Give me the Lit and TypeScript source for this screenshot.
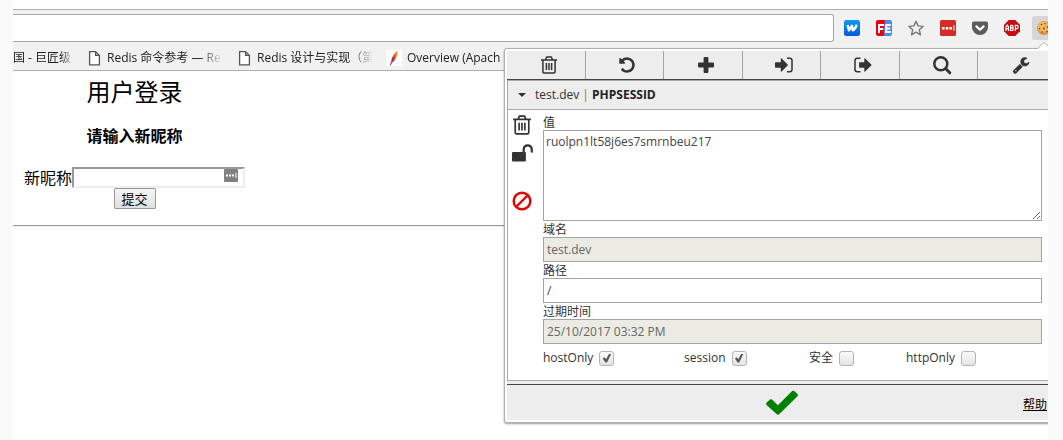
import { LitElement, html, css, svg } from "lit";
import { customElement, property } from "lit/decorators.js";

const shapes: Record<string, unknown> = {
  trash: svg`<g fill="none" stroke="currentColor" stroke-width="1.5" stroke-linejoin="round"><path d="M1 4h16M5.600 3.700L6.600 1h4.800l1 2.700M2.900 4.300v10.900q0 1.800 1.700 1.800h8.800q1.700 0 1.700-1.800V4.300M6.400 7v7M9 7v7M11.600 7v7"/></g>`,
  undo: svg`<path transform="scale(.01005)" fill="currentColor" d="M1664 896q0 156-61 298t-164 245-245 164-298 61q-172 0-327-72.500t-264-204.500q-7-10-6.500-22.500t8.500-20.500l137-138q10-9 25-9 16 2 23 12 73 95 179 147t225 52q104 0 198.500-40.500t163.500-109.500 109.500-163.500 40.500-198.500-40.500-198.500-109.500-163.500-163.500-109.500-198.500-40.500q-98 0-188 35.500t-160 101.500l137 138q31 30 14 69-17 40-59 40h-448q-26 0-45-19t-19-45v-448q0-42 40-59 39-17 69 14l130 129q107-101 244.500-156.500t284.500-55.500q156 0 298 61t245 164 164 245 61 298z"/>`,
  plus: svg`<path fill="currentColor" d="M7.600 1h2.800q1 0 1 1v4.600H16q1 0 1 1v2.800q0 1-1 1h-4.600V16q0 1-1 1H7.600q-1 0-1-1v-4.600H2q-1 0-1-1V7.600q0-1 1-1h4.600V2q0-1 1-1z"/>`,
  signin: svg`<path fill="currentColor" d="M.7 6.300h5.100V2.800q0-.9.800-.3l6 6q.5.500 0 1l-6 6q-.8.600-.8-.3v-3.500H.7q-.7 0-.7-.7v-4q0-.7.700-.7z"/><path fill="none" stroke="currentColor" stroke-width="1.500" d="M12 2.300h2.700q2.300 0 2.300 2.200v9q0 2.200-2.300 2.200H12"/>`,
  signout: svg`<path fill="currentColor" d="M5.800 6.300h4.500V2.800q0-.9.800-.3l6.200 6q.5.500 0 1l-6.200 6q-.8.600-.8-.3v-3.500H5.800q-.7 0-.7-.7v-4q0-.7.700-.7z"/><path fill="none" stroke="currentColor" stroke-width="1.500" d="M6.500 2.300H3.300Q1 2.300 1 4.500v9q0 2.200 2.300 2.200h3.200"/>`,
  search: svg`<circle cx="7.800" cy="7.800" r="6.500" fill="none" stroke="currentColor" stroke-width="2.500"/><path stroke="currentColor" stroke-width="3" stroke-linecap="round" d="M12.800 12.800l4 4"/>`,
  wrench: svg`<path transform="scale(.01005)" fill="currentColor" d="M448 1472q0-26-19-45t-45-19-45 19-19 45 19 45 45 19 45-19 19-45zm644-420l-682 682q-37 37-90 37-52 0-91-37l-106-108q-38-36-38-90 0-53 38-91l681-681q39 98 114.500 173.500t173.500 114.500zm634-435q0 39-23 106-47 134-164.500 217.500t-258.500 83.500q-185 0-316.500-131.500t-131.500-316.500 131.500-316.500 316.500-131.500q58 0 121.500 16.500t107.500 46.500q16 11 16 28t-16 28l-293 169v224l193 107q5-3 79-48.500t135.500-81 70.500-35.500q15 0 23.500 10t8.500 25z"/>`,
  unlock: svg`<rect x="0" y="8" width="12.500" height="8.700" rx="1" fill="currentColor"/><path fill="none" stroke="currentColor" stroke-width="2" stroke-linecap="round" d="M10.500 8V5.500a3.700 4 0 0 1 7.300 0v2.300"/>`,
  ban: svg`<circle cx="9" cy="9" r="7.500" fill="none" stroke="currentColor" stroke-width="2.200"/><path stroke="currentColor" stroke-width="2.200" d="M3.600 14.400L14.400 3.600"/>`,
  check: svg`<path fill="currentColor" d="M.3 8.900l1.900-1.800q.6-.5 1.200 0l3.300 3.100 8-7.900q.6-.5 1.200 0l1.800 1.700q.6.600 0 1.200L7.400 15.300q-.7.500-1.300 0L.3 10.100q-.6-.6 0-1.200z"/>`,
  page: svg`<path fill="#fff" stroke="#555" stroke-width="1.300" d="M3.600 1.600h6l3.800 3.800v9.500H3.600zM9.600 1.600v3.800h3.800"/>`,
  feather: svg`<defs><linearGradient id="plume" x1="0" y1="1" x2=".4" y2="0"><stop offset="0" stop-color="#6a2c91"/><stop offset=".5" stop-color="#cb2138"/><stop offset="1" stop-color="#f59a23"/></linearGradient></defs><rect width="16" height="16" fill="#fff"/><path fill="url(#plume)" d="M11 .8q1.300 1.400 0 5l-3 5.200-2 1.700L4.500 15.500l-.8-.2 1.500-3.500q0-4 2.800-7.800z"/>`,
  w: svg`<defs><linearGradient id="sky" x2="0" y2="1"><stop stop-color="#0c9bf6"/><stop offset="1" stop-color="#0659d6"/></linearGradient></defs><rect width="16" height="16" rx="2.500" fill="url(#sky)"/><path fill="none" stroke="#fff" stroke-width="2.400" stroke-linejoin="round" d="M3.600 5l1.300 5.300L8 5.800l.8 4.500q3.200-1.500 3.600-5.600"/>`,
  fe: svg`<path fill="#e80010" d="M2 0h7v16H2q-2 0-2-2V2Q0 0 2 0z"/><path fill="#4a8df0" d="M9 0h5q2 0 2 2v12q0 2-2 2H8V9z"/><path fill="none" stroke="#fff" stroke-width="2" d="M3 13V5h5M3 9h4.300M14.700 5h-4.500v7h4.700M10 8.600h4.300"/>`,
  star: svg`<path fill="none" stroke="#777" stroke-width="1.400" stroke-linejoin="round" d="M8 1.200l2.100 4.700 5 .5-3.800 3.400 1.200 5L8 12.200l-4.500 2.600 1.200-5L.9 6.400l5-.5z"/>`,
  dots: svg`<rect width="16" height="16" rx="1.500" fill="#d32d27"/><path fill="#fff" d="M2 7h2.500v2.500H2zM5.700 7h2.500v2.500H5.700zM9.400 7h2.500v2.500H9.400zM13.400 5.200h1v5.600h-1z"/>`,
  pocket: svg`<path fill="#5b5b5b" d="M1.500 1.500h13q1.500 0 1.500 1.500v4.300a8 7.700 0 0 1-16 0V3q0-1.500 1.500-1.500z"/><path fill="none" stroke="#fff" stroke-width="2.200" stroke-linecap="round" stroke-linejoin="round" d="M4.400 6.400L8 9.800l3.600-3.400"/>`,
  abp: svg`<path fill="#c70d12" d="M4.700 0h6.600L16 4.700v6.600L11.300 16H4.700L0 11.300V4.700z"/><path fill="none" stroke="#fff" stroke-width="1.200" d="M2 11V7l1.200-1.900L4.500 7v4M2 8.700h2.500M6.600 5.400v5.100h1.500q1.200 0 1.200-1.300T8 7.900H6.600M6.600 5.400H8q1 0 1 1.200T8 7.900M11.400 11V5.400h1.300q1.400 0 1.400 1.600t-1.400 1.600h-1.300"/>`,
  cookie: svg`<circle cx="8" cy="8" r="7" fill="#d9953f"/><circle cx="7.500" cy="7" r="5.800" fill="#f0b45e"/><g fill="#7a431a"><circle cx="5.500" cy="4.500" r=".8"/><circle cx="9" cy="3.500" r=".7"/><circle cx="3.500" cy="8.500" r=".8"/><circle cx="8" cy="8.500" r=".9"/><circle cx="6" cy="12" r=".8"/><circle cx="11.500" cy="7" r=".8"/><circle cx="11" cy="11.500" r=".8"/></g>`,
  key: svg`<rect width="14" height="13" rx="1" fill="#808080"/><path fill="#fff" d="M2 5.500h2v2H2zM5 5.500h2v2H5zM8 5.500h2v2H8zM11.500 4h1v5h-1z"/>`,
};

@customElement("glyph-icon")
class GlyphIcon extends LitElement {
  @property() name = "";
  @property() box = "0 0 18 18";
  static styles = css`
    :host { display: block; flex: none; width: 18px; height: 18px; }
    .art { display: block; width: 100%; height: 100%; overflow: visible; }
  `;
  render() {
    return html`<svg class="art" viewBox=${this.box} aria-hidden="true">${shapes[this.name]}</svg>`;
  }
}

@customElement("cookie-popup")
class CookiePopup extends LitElement {
  static styles = css`
    :host {
      display: block; box-sizing: border-box; padding: 2px;
      background: #fff; border: 1px solid #b0b0b0; border-radius: 3px;
      box-shadow: 0 1px 2px rgba(0, 0, 0, 0.4);
      font: 12px/16px "Open Sans", "Noto Sans CJK SC", sans-serif; color: #333;
    }
    *, *::before { box-sizing: border-box; }
    button { border: 0; padding: 0; margin: 0; background: none; color: #333; font: inherit; }
    .bar { display: grid; grid-template-columns: repeat(7, 1fr); background: #ededed; border-bottom: 1px solid #444; }
    .tool { display: flex; align-items: center; justify-content: center; height: 28px; padding-left: 6px; border-right: 1px solid #a5a5a5; }
    .tool:last-child { border-right: 0; }
    .card { border: 1px solid #a9a9a9; background: #fff; }
    .head { display: flex; align-items: center; gap: 9px; width: 100%; height: 29px; padding-left: 10px; background: #ededed; border-bottom: 1px solid #a9a9a9; }
    .caret { border: 4px solid transparent; border-top-color: #333; border-bottom: 0; }
    .head b { color: #222; }
    .sep { color: #a07828; }
    .body { display: flex; gap: 10px; padding: 4px 14px 14px 4px; }
    .side { display: flex; flex-direction: column; width: 21px; gap: 8px; padding-top: 1px; }
    .side glyph-icon { width: 20px; height: 20px; }
    .ban { color: #e60000; margin-top: 20px; }
    .fields { flex: 1; min-width: 0; display: flex; flex-direction: column; }
    .field { display: flex; flex-direction: column; }
    .label { height: 16px; line-height: 18px; }
    .text { width: 100%; height: 25px; margin: 0; padding: 0 3px; border: 1px solid #a5a5a5; border-radius: 0; background: #fff; color: #444; font: inherit; }
    .area { height: 91px; padding: 3px 2px; resize: both; outline: 0; }
    .text:disabled { background: #ebebe4; color: #666; }
    .flags { display: grid; grid-template-columns: 141fr 125fr 97fr 136fr; padding-top: 6px; }
    .flag { display: flex; align-items: center; gap: 6px; height: 16px; }
    .tick {
      appearance: none; width: 15px; height: 15px; margin: 0; border: 1px solid #b5b5b5; border-radius: 3px;
      background: linear-gradient(#fafafa, #e4e4e4); display: grid; place-items: center;
    }
    .tick:checked::before { content: ""; width: 9px; height: 9px; background: #555; clip-path: polygon(5% 55%, 25% 42%, 42% 65%, 76% 4%, 100% 4%, 52% 100%, 34% 100%); }
    .foot { display: grid; grid-template-columns: 1fr auto 1fr; align-items: center; height: 36px; margin-top: 3px; background: #ededed; border-top: 1px solid #444; padding: 0 10px; }
    .save { color: #008000; grid-column: 2; }
    .save glyph-icon { width: 32px; height: 32px; }
    .help { justify-self: end; color: #000; line-height: 20px; padding-top: 4px; }
    .back { background: #ededed; }
  `;
  render() {
    const tools = [["trash", "删除"], ["undo", "还原"], ["plus", "添加"], ["signin", "导入"], ["signout", "导出"], ["search", "搜索"], ["wrench", "选项"]];
    const flags: [string, boolean][] = [["hostOnly", true], ["session", true], ["安全", false], ["httpOnly", false]];
    return html`
      <div class="back">
        <div class="bar">${tools.map(([n, t]) => html`<button class="tool" aria-label=${t}><glyph-icon name=${n}></glyph-icon></button>`)}</div>
        <div class="card">
          <button class="head"><i class="caret"></i><span>test.dev <span class="sep">|</span> <b>PHPSESSID</b></span></button>
          <div class="body">
            <div class="side">
              <button aria-label="删除"><glyph-icon name="trash"></glyph-icon></button>
              <button aria-label="锁定"><glyph-icon name="unlock"></glyph-icon></button>
              <button class="ban" aria-label="屏蔽"><glyph-icon name="ban"></glyph-icon></button>
            </div>
            <div class="fields">
              <div class="field"><label class="label" for="value">值</label><textarea class="text area" id="value" spellcheck="false" .value=${"ruolpn1lt58j6es7smrnbeu217"}></textarea></div>
              <div class="field"><label class="label" for="domain">域名</label><input class="text" id="domain" value="test.dev" disabled></div>
              <div class="field"><label class="label" for="path">路径</label><input class="text" id="path" value="/"></div>
              <div class="field"><label class="label" for="expiry">过期时间</label><input class="text" id="expiry" value="25/10/2017 03:32 PM" disabled></div>
              <div class="flags">${flags.map(([t, on]) => html`<label class="flag">${t}<input class="tick" type="checkbox" .checked=${on}></label>`)}</div>
            </div>
          </div>
        </div>
        <div class="foot">
          <button class="save" aria-label="保存"><glyph-icon name="check"></glyph-icon></button>
          <a class="help" href="#help">帮助</a>
        </div>
      </div>`;
  }
}

@customElement("app-root")
class AppRoot extends LitElement {
  static styles = css`
    :host { display: block; min-height: 100vh; background: #fafafa; }
    * { box-sizing: border-box; }
    .frame { position: relative; overflow: hidden; min-height: 100vh; margin: 0 15px 0 13px; padding-top: 9px; background: #fff; color: #000; font: 16px/20px "Noto Sans CJK SC", sans-serif; }
    .chrome { background: #f1f1f1; border-top: 1px solid #b0b0b0; border-bottom: 1px solid #b0b0b0; }
    .nav { display: flex; align-items: center; gap: 16px; height: 36px; margin-right: -12px; }
    .url { flex: 1; min-width: 0; height: 28px; margin-right: -6px; border: 1px solid #a5a5a5; border-left: 0; border-radius: 0 3px 3px 0; background: #fff; }
    .ext { border: 0; padding: 0; background: none; }
    .small { width: 16px; height: 16px; }
    .active { margin-left: -4px; padding: 4px 8px 4px 4px; background: #d6d6d6; border-radius: 2px; }
    .marks { display: flex; align-items: center; gap: 13px; height: 24px; font: 12px/16px "Open Sans", "Noto Sans CJK SC", sans-serif; }
    .mark { display: flex; align-items: center; gap: 5px; color: #222; text-decoration: none; }
    .name { width: 116px; white-space: nowrap; mask-image: linear-gradient(90deg, #000 80%, transparent); }
    .first { width: 60px; }
    .login { display: flex; flex-direction: column; align-items: center; width: fit-content; margin-left: 11px; }
    .title { margin: 2px 0 0; font: 400 24px/36px "Noto Sans CJK SC", sans-serif; }
    .sub { margin: 16px 0 20px; font: 700 16px/20px "Noto Sans CJK SC", sans-serif; }
    .row { display: flex; align-items: flex-end; padding-top: 2px; line-height: 22px; }
    .row label { margin-top: -2px; }
    .box { position: relative; display: flex; }
    .nick { width: 173px; height: 21px; border: 2px solid #eee; border-top-color: #999; border-left-color: #999; padding: 1px 20px 1px 2px; background: #fff; }
    .keys { position: absolute; right: 7px; top: 2px; width: 14px; height: 13px; }
    .send { width: 42px; height: 21px; padding: 0; border: 1px solid #999; border-radius: 1px; background: linear-gradient(#f6f6f6, #dedede); color: #000; font: 13px/16px "Noto Sans CJK SC", sans-serif; }
    .rule { height: 2px; margin: 16px 0 0; border: 0; border-top: 1px solid #999; border-bottom: 1px solid #eee; }
    .popup { position: absolute; top: 48px; right: -12px; width: 556px; }
    .tip { position: absolute; top: 42px; right: -3px; width: 14px; height: 7px; z-index: 1; overflow: visible; }
  `;
  render() {
    const exts = [["w", "W"], ["fe", "FE"], ["star", "收藏"], ["dots", "密码"], ["pocket", "Pocket"], ["abp", "ABP"]];
    const b = "0 0 16 16";
    return html`
      <div class="frame">
        <header class="chrome">
          <div class="nav">
            <input class="url" aria-label="地址">
            ${exts.map(([n, t]) => html`<button class="ext" aria-label=${t}><glyph-icon class="small" name=${n} box=${b}></glyph-icon></button>`)}
            <button class="ext active" aria-label="Cookie"><glyph-icon class="small" name="cookie" box=${b}></glyph-icon></button>
          </div>
          <nav class="marks">
            <a class="mark" href="#1"><span class="name first">国 - 巨匠级</span></a>
            <a class="mark" href="#2"><glyph-icon class="small" name="page" box=${b}></glyph-icon><span class="name">Redis 命令参考 — Re</span></a>
            <a class="mark" href="#3"><glyph-icon class="small" name="page" box=${b}></glyph-icon><span class="name">Redis 设计与实现（第</span></a>
            <a class="mark" href="#4"><glyph-icon class="small" name="feather" box=${b}></glyph-icon><span class="name">Overview (Apach</span></a>
          </nav>
        </header>
        <form class="login">
          <h2 class="title">用户登录</h2>
          <h4 class="sub">请输入新昵称</h4>
          <div class="row"><label for="nick">新昵称</label><span class="box"><input class="nick" id="nick"><glyph-icon class="keys" name="key" box="0 0 14 13"></glyph-icon></span></div>
          <button class="send" type="button">提交</button>
        </form>
        <hr class="rule">
        <cookie-popup class="popup"></cookie-popup>
        <svg class="tip" viewBox="0 0 14 7" aria-hidden="true"><path d="M0 7L7 .5 14 7" fill="#fff" stroke="#b0b0b0"/></svg>
      </div>`;
  }
}
